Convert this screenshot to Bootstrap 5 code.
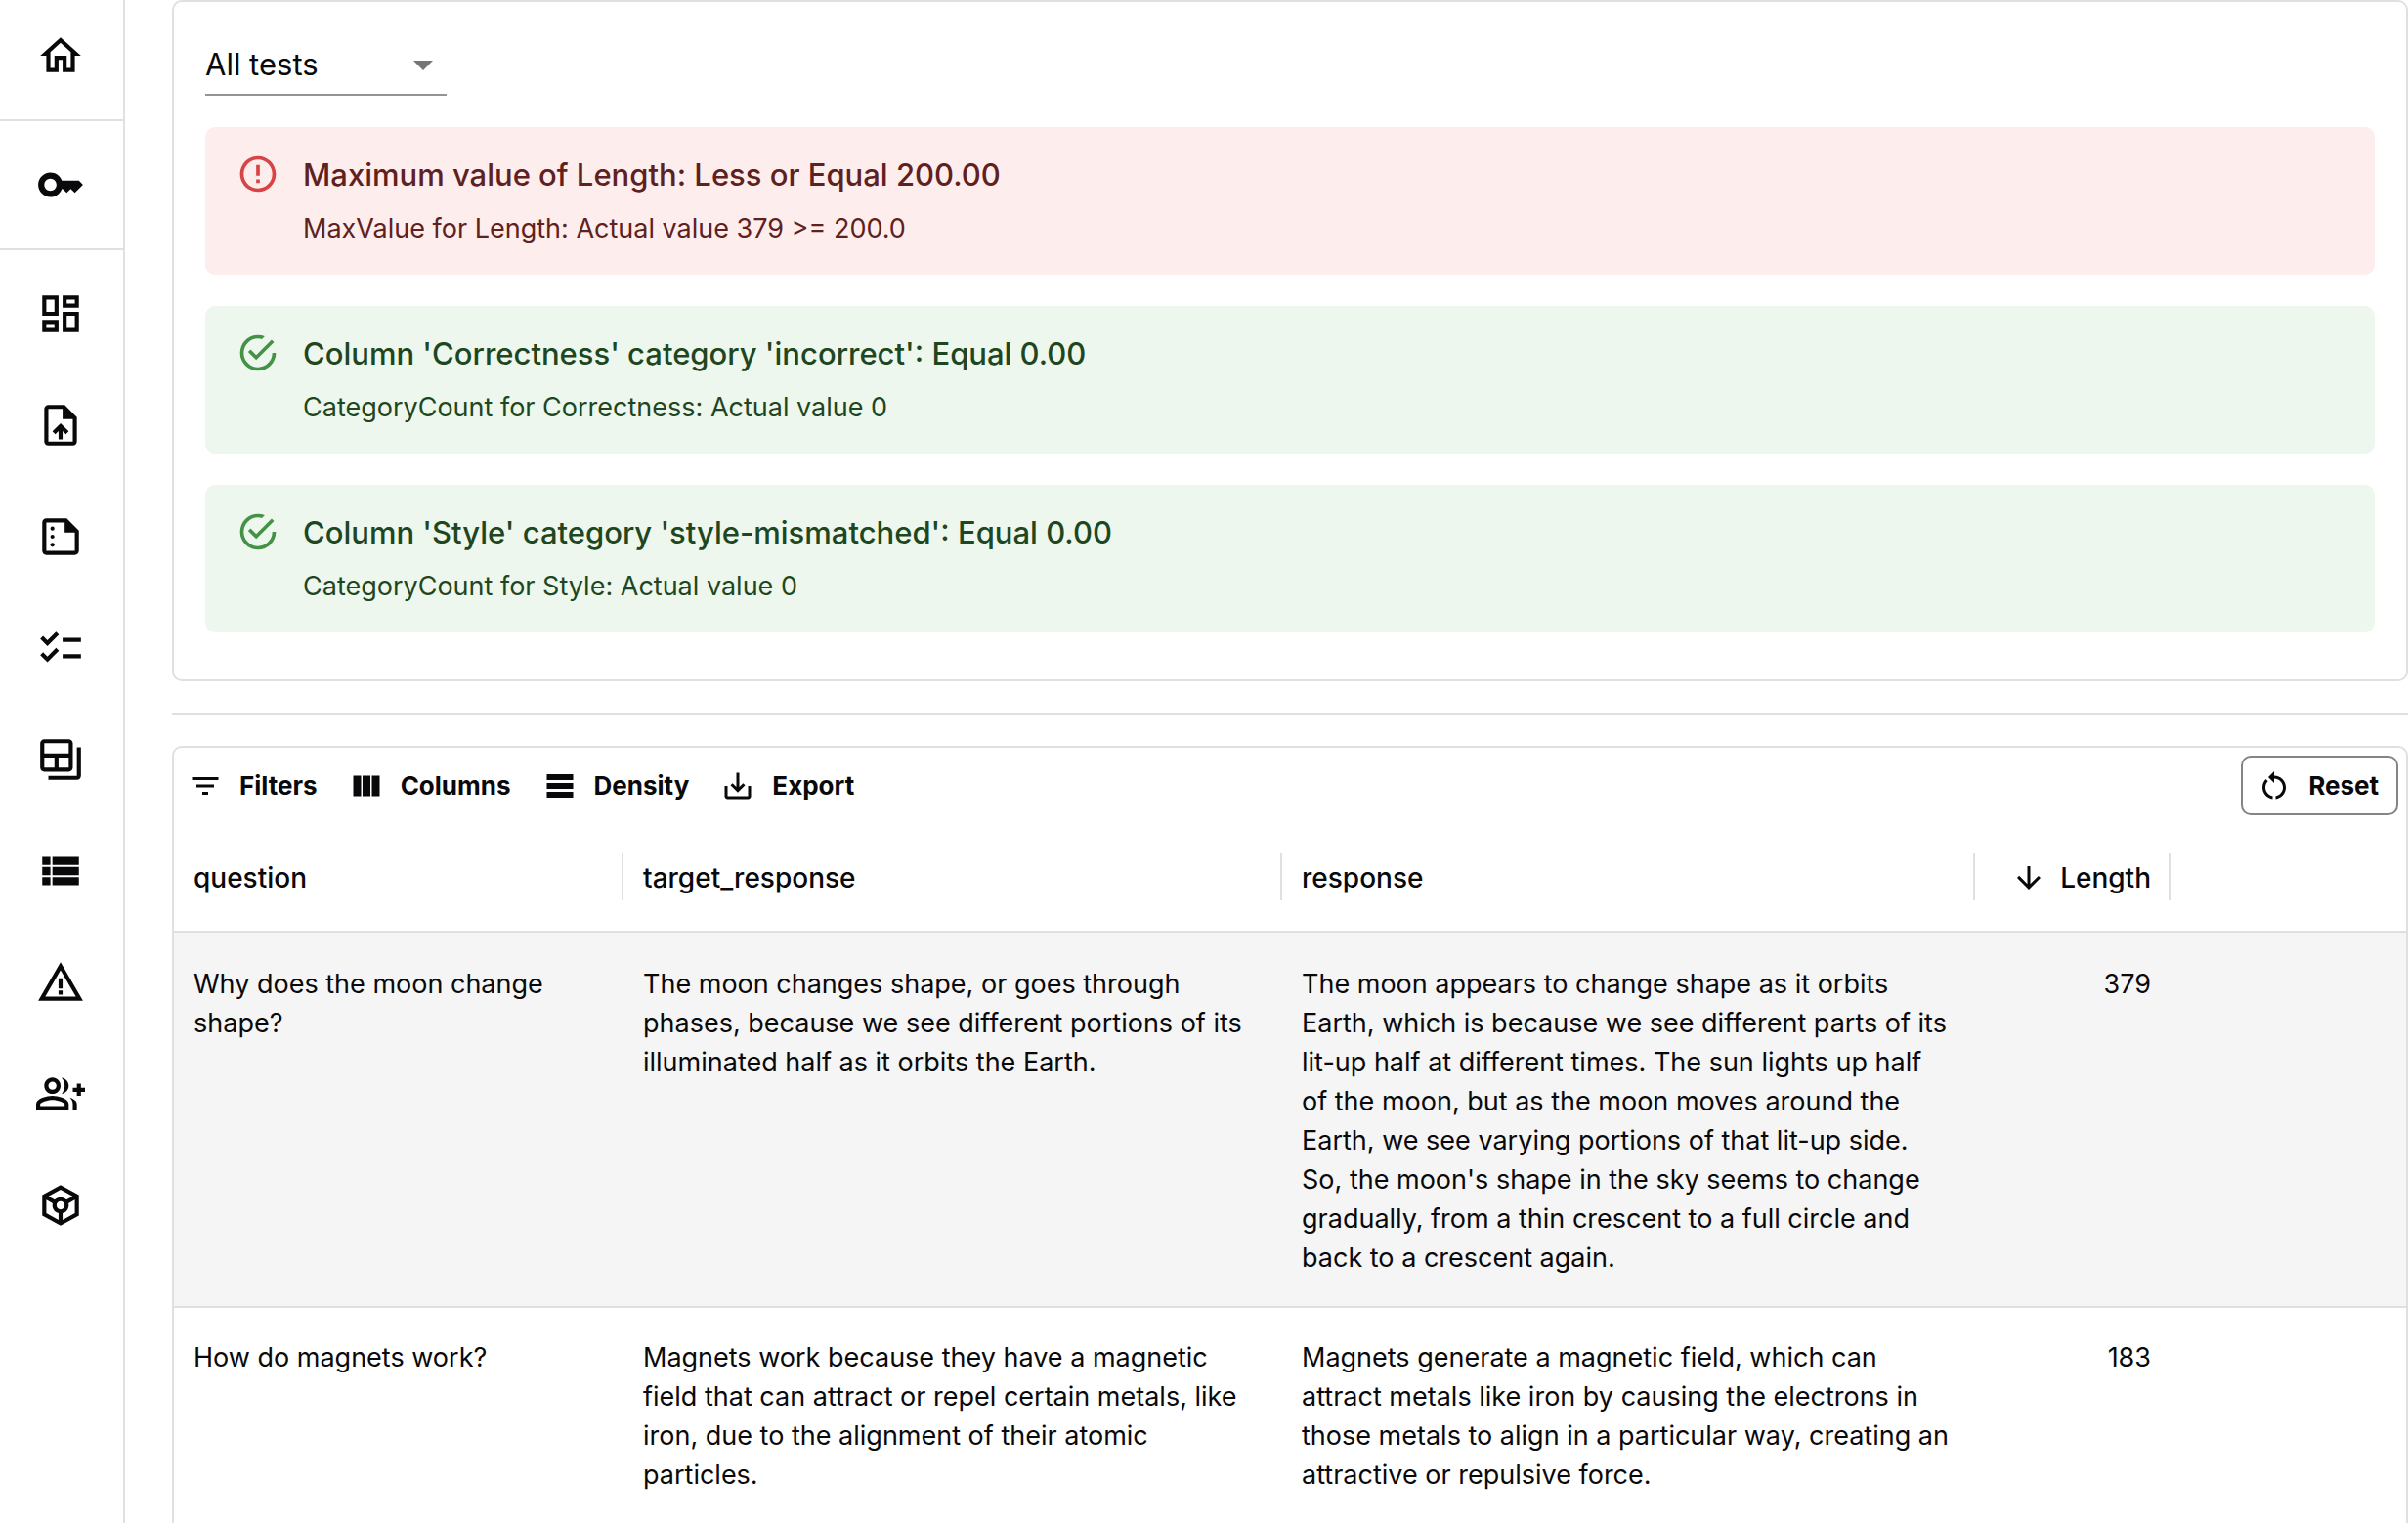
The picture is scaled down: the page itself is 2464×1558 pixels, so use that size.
<!DOCTYPE html>
<html lang="en">
<head>
<meta charset="utf-8">
<meta name="viewport" content="width=device-width, initial-scale=1">
<title>Test results</title>
<link href="https://cdn.jsdelivr.net/npm/bootstrap@5.3.0/dist/css/bootstrap.min.css" rel="stylesheet">
<style>
  :root { --line: #e0e0e0; --ink: #09090b; }
  body { font-family: Inter, "Liberation Sans", sans-serif; font-size: 27px; line-height: 40px; color: var(--ink); background: #fff; }
  svg { fill: currentColor; display: block; flex: none; }

  .side-rail { width: 128px; border-right: 2px solid var(--line); }
  .rail-link { height: 114px; padding-right: 2px; color: var(--ink); }
  .rail-link svg { width: 50px; height: 50px; }
  .rail-top { height: 132px; border-bottom: 2px solid var(--line); }
  .rail-first { height: 124px; padding-bottom: 8px; }
  .rail-group { padding-top: 8px; }

  .content-area { padding-left: 48px; }
  .panel { border: 2px solid var(--line); border-radius: 10px; }
  .tests-panel { padding: 32px 32px 48px; gap: 32px; }
  .divider { margin: 32px 0; border-top: 2px solid var(--line); opacity: 1; color: inherit; }

  .test-filter { width: 247px; border-bottom: 2px solid #949494; }
  .test-filter select { appearance: none; border: 0; border-radius: 0; background: none; outline: 0; font-size: 31px; line-height: 46px; padding: 9px 48px 7px 0; color: var(--ink); }
  .test-filter svg { position: absolute; right: 0; top: 8px; width: 48px; height: 48px; color: #757575; pointer-events: none; }

  .test-note { margin: 0; border: 0; border-radius: 10px; padding: 12px 32px; gap: 24px; }
  .test-note svg { width: 44px; height: 44px; margin-top: 14px; }
  .test-note h2 { font-size: 31px; line-height: 48px; font-weight: 500; margin: 0 0 11px; color: inherit; }
  .test-note .note-text { padding: 13px 0 15px; }
  .note-fail { background: #fdeded; color: #5f2120; }
  .note-fail svg { color: #d84343; }
  .note-pass { background: #edf7ed; color: #1e4620; }
  .note-pass svg { color: #439246; }

  .grid-panel { border-bottom-left-radius: 0; border-bottom-right-radius: 0; border-bottom: 0; }
  .grid-bar { padding: 8px; gap: 16px; }
  .tool { font-size: 26px; line-height: 45px; font-weight: 700; color: var(--ink); padding: 8px 10px 8px 6px; gap: 17px; border: 0; border-radius: 10px; }
  .tool svg { width: 36px; height: 36px; }
  .tool-outline { padding: 6px 18px 6px 14px; border: 2px solid #848484; }

  .data-grid { table-layout: fixed; border-collapse: separate; border-spacing: 0; margin: 0; color: var(--ink); }
  .data-grid th { height: 112px; padding: 0; font-size: 28px; font-weight: 500; border-bottom: 2px solid var(--line); vertical-align: middle; }
  .data-grid th > div { height: 48px; padding: 2px 18px 0 20px; border-right: 2px solid var(--line); gap: 14px; }
  .data-grid th:last-child > div { border-right: 0; }
  .data-grid th svg { width: 36px; height: 36px; }
  .data-grid td { padding: 31px 24px 29px 20px; border-top: 2px solid var(--line); vertical-align: top; }
  .data-grid td.num { padding-right: 20px; }
  .data-grid .row-hover td { background: #f5f5f5; border-top-color: #f5f5f5; }
  .c-question { width: 460px; } .c-target { width: 674px; } .c-response { width: 709px; } .c-length { width: 200px; }
</style>
</head>
<body>
<div class="d-flex vh-100 overflow-hidden">
  <nav class="side-rail flex-shrink-0" aria-label="Main">
    <a class="rail-link rail-top rail-first d-flex align-items-center justify-content-center" href="#" aria-label="Home"><svg viewBox="0 0 24 24"><path d="M12 5.69l5 4.5V18h-2v-6H9v6H7v-7.81l5-4.5M12 3L2 12h3v8h6v-6h2v6h6v-8h3L12 3z"/></svg></a>
    <a class="rail-link rail-top d-flex align-items-center justify-content-center" href="#" aria-label="Secrets"><svg viewBox="0 0 24 24"><path d="M21 10h-8.35C11.83 7.67 9.61 6 7 6c-3.31 0-6 2.69-6 6s2.69 6 6 6c2.61 0 4.83-1.67 5.65-4H13l2 2 2-2 2 2 4-4.04L21 10zM7 15c-1.65 0-3-1.35-3-3s1.35-3 3-3 3 1.35 3 3-1.35 3-3 3z"/></svg></a>
    <div class="rail-group">
      <a class="rail-link d-flex align-items-center justify-content-center" href="#" aria-label="Dashboard"><svg viewBox="0 0 24 24"><path d="M19 5v2h-4V5h4M9 5v6H5V5h4m10 8v6h-4v-6h4M9 17v2H5v-2h4M21 3h-8v6h8V3zM11 3H3v10h8V3zm10 8h-8v10h8V11zm-10 4H3v6h8v-6z"/></svg></a>
      <a class="rail-link d-flex align-items-center justify-content-center" href="#" aria-label="Upload"><svg viewBox="0 0 24 24"><path d="M14 2H6c-1.1 0-1.99.9-1.99 2L4 20c0 1.1.89 2 1.99 2H18c1.1 0 2-.9 2-2V8l-6-6zm4 18H6V4h7v5h5v11zM8 15.01l1.41 1.41L11 14.84V19h2v-4.16l1.59 1.59L16 15.01 12.01 11z"/></svg></a>
      <a class="rail-link d-flex align-items-center justify-content-center" href="#" aria-label="Reports"><svg viewBox="0 0 24 24"><path d="M15 3H5c-1.1 0-1.99.9-1.99 2L3 19c0 1.1.89 2 1.99 2H19c1.1 0 2-.9 2-2V9l-6-6zM5 19V5h9v5h5v9H5z"/><circle cx="8" cy="8" r="1"/><circle cx="8" cy="12" r="1"/><circle cx="8" cy="16" r="1"/></svg></a>
      <a class="rail-link d-flex align-items-center justify-content-center" href="#" aria-label="Test suites"><svg viewBox="0 0 24 24"><path d="M22 7h-9v2h9V7zm0 8h-9v2h9v-2zM5.54 11L2 7.46l1.41-1.41 2.12 2.12 4.24-4.24 1.41 1.41L5.54 11zm0 8L2 15.46l1.41-1.41 2.12 2.12 4.24-4.24 1.41 1.41L5.54 19z"/></svg></a>
      <a class="rail-link d-flex align-items-center justify-content-center" href="#" aria-label="Snapshots"><svg viewBox="0 0 24 24"><path d="M20 6v14H6v2h14c1.1 0 2-.9 2-2V6h-2z"/><path d="M16 2H4c-1.1 0-2 .9-2 2v12c0 1.1.9 2 2 2h12c1.1 0 2-.9 2-2V4c0-1.1-.9-2-2-2zM9 16H4v-5h5v5zm7 0h-5v-5h5v5zm0-7H4V4h12v5z"/></svg></a>
      <a class="rail-link d-flex align-items-center justify-content-center" href="#" aria-label="Datasets"><svg viewBox="0 0 24 24"><path d="M3 14h4v-4H3v4zm0 5h4v-4H3v4zM3 9h4V5H3v4zm5 5h13v-4H8v4zm0 5h13v-4H8v4zM8 5v4h13V5H8z"/></svg></a>
      <a class="rail-link d-flex align-items-center justify-content-center" href="#" aria-label="Alerts"><svg viewBox="0 0 24 24"><path d="M12 5.99L19.53 19H4.47L12 5.99M12 2L1 21h22L12 2zm1 14h-2v2h2v-2zm0-6h-2v5h2v-5z"/></svg></a>
      <a class="rail-link d-flex align-items-center justify-content-center" href="#" aria-label="Add members"><svg viewBox="0 0 24 24"><path d="M22 9V7h-2v2h-2v2h2v2h2v-2h2V9zM8 12c2.21 0 4-1.79 4-4s-1.79-4-4-4-4 1.79-4 4 1.79 4 4 4zm0-6c1.1 0 2 .9 2 2s-.9 2-2 2-2-.9-2-2 .9-2 2-2zm0 7c-2.67 0-8 1.34-8 4v3h16v-3c0-2.66-5.33-4-8-4zm6 5H2v-.99C2.2 16.29 5.3 15 8 15s5.8 1.29 6 2v1zM12.51 4.05C13.43 5.11 14 6.49 14 8s-.57 2.89-1.49 3.95C14.47 11.7 16 10.04 16 8s-1.53-3.7-3.49-3.95zM16.53 13.83C17.42 14.66 18 15.7 18 17v3h2v-3c0-1.45-1.59-2.51-3.47-3.17z"/></svg></a>
      <a class="rail-link d-flex align-items-center justify-content-center" href="#" aria-label="Models"><svg viewBox="0 0 24 24"><path d="M21 7l-9-5-9 5v10l9 5 9-5V7zm-9-2.71l5.91 3.28-3.01 1.67C14.17 8.48 13.14 8 12 8s-2.17.48-2.9 1.24L6.09 7.57 12 4.29zm-1 14.87l-6-3.33V9.26L8.13 11c-.08.31-.13.65-.13 1 0 1.86 1.27 3.43 3 3.87v3.29zM10 12c0-1.1.9-2 2-2s2 .9 2 2-.9 2-2 2-2-.9-2-2zm3 7.16v-3.28c1.73-.44 3-2.01 3-3.87 0-.35-.05-.69-.13-1.01L19 9.26v6.57l-6 3.33z"/></svg></a>
    </div>
  </nav>

  <main class="content-area flex-grow-1">
    <section class="panel tests-panel d-flex flex-column" aria-label="Tests">
      <div class="test-filter position-relative">
        <select class="w-100 d-block" aria-label="Test filter"><option>All tests</option><option>Failed tests</option><option>Passed tests</option></select>
        <svg viewBox="0 0 24 24"><path d="M7 10l5 5 5-5z"/></svg>
      </div>
      <div class="alert test-note note-fail d-flex" role="alert">
        <svg viewBox="0 0 24 24"><path d="M11 15h2v2h-2zm0-8h2v6h-2zm.99-5C6.47 2 2 6.48 2 12s4.47 10 9.99 10C17.52 22 22 17.52 22 12S17.52 2 11.99 2zM12 20c-4.42 0-8-3.58-8-8s3.58-8 8-8 8 3.58 8 8-3.58 8-8 8z"/></svg>
        <div class="note-text"><h2>Maximum value of Length: Less or Equal 200.00</h2><div>MaxValue for Length: Actual value 379 &gt;= 200.0</div></div>
      </div>
      <div class="alert test-note note-pass d-flex" role="alert">
        <svg viewBox="0 0 24 24"><path d="M20 12a8 8 0 0 1-8 8 8 8 0 0 1-8-8 8 8 0 0 1 8-8c.76 0 1.5.11 2.2.31l1.57-1.57A9.82 9.82 0 0 0 12 2 10 10 0 0 0 2 12a10 10 0 0 0 10 10 10 10 0 0 0 10-10M7.91 10.08L6.5 11.5 11 16 21 6l-1.41-1.42L11 13.17l-3.09-3.09z"/></svg>
        <div class="note-text"><h2>Column 'Correctness' category 'incorrect': Equal 0.00</h2><div>CategoryCount for Correctness: Actual value 0</div></div>
      </div>
      <div class="alert test-note note-pass d-flex" role="alert">
        <svg viewBox="0 0 24 24"><path d="M20 12a8 8 0 0 1-8 8 8 8 0 0 1-8-8 8 8 0 0 1 8-8c.76 0 1.5.11 2.2.31l1.57-1.57A9.82 9.82 0 0 0 12 2 10 10 0 0 0 2 12a10 10 0 0 0 10 10 10 10 0 0 0 10-10M7.91 10.08L6.5 11.5 11 16 21 6l-1.41-1.42L11 13.17l-3.09-3.09z"/></svg>
        <div class="note-text"><h2>Column 'Style' category 'style-mismatched': Equal 0.00</h2><div>CategoryCount for Style: Actual value 0</div></div>
      </div>
    </section>

    <hr class="divider">

    <section class="panel grid-panel" aria-label="Results">
      <div class="grid-bar d-flex align-items-center">
        <button type="button" class="btn tool d-flex align-items-center"><svg viewBox="0 0 24 24"><path d="M10 18h4v-2h-4v2zM3 6v2h18V6H3zm3 7h12v-2H6v2z"/></svg>Filters</button>
        <button type="button" class="btn tool d-flex align-items-center"><svg viewBox="0 0 24 24"><path d="M14.67 5v14H9.33V5h5.34zm1 14H21V5h-5.33v14zm-7.34 0V5H3v14h5.33z"/></svg>Columns</button>
        <button type="button" class="btn tool d-flex align-items-center"><svg viewBox="0 0 24 24"><path d="M21 8H3V4h18v4zm0 2H3v4h18v-4zm0 6H3v4h18v-4z"/></svg>Density</button>
        <button type="button" class="btn tool d-flex align-items-center"><svg viewBox="0 0 24 24"><path d="M19 12v7H5v-7H3v7c0 1.100.9 2 2 2h14c1.100 0 2-.9 2-2v-7h-2zm-6 .67l2.590-2.580L17 11.500l-5 5-5-5 1.410-1.410L11 12.670V3h2z"/></svg>Export</button>
        <button type="button" class="btn tool tool-outline d-flex align-items-center ms-auto"><svg viewBox="0 0 24 24"><path d="M12 5V2L8 6l4 4V7c3.310 0 6 2.690 6 6 0 2.970-2.170 5.430-5 5.910v2.020c3.950-.49 7-3.850 7-7.930 0-4.420-3.580-8-8-8zm-6 8c0-1.650.67-3.150 1.760-4.240L6.340 7.340C4.900 8.790 4 10.790 4 13c0 4.080 3.050 7.440 7 7.930v-2.020c-2.830-.48-5-2.940-5-5.910z"/></svg>Reset</button>
      </div>
      <table class="data-grid w-100">
        <colgroup><col class="c-question"><col class="c-target"><col class="c-response"><col class="c-length"><col></colgroup>
        <thead>
          <tr>
            <th scope="col"><div class="d-flex align-items-center">question</div></th>
            <th scope="col"><div class="d-flex align-items-center">target_response</div></th>
            <th scope="col"><div class="d-flex align-items-center">response</div></th>
            <th scope="col" aria-sort="descending"><div class="d-flex align-items-center justify-content-end"><svg viewBox="0 0 24 24"><path d="M20 12l-1.410-1.410L13 16.170V4h-2v12.170l-5.580-5.590L4 12l8 8 8-8z"/></svg>Length</div></th>
            <th><div></div></th>
          </tr>
        </thead>
        <tbody>
          <tr class="row-hover">
            <td>Why does the moon change shape?</td>
            <td>The moon changes shape, or goes through phases, because we see different portions of its illuminated half as it orbits the Earth.</td>
            <td>The moon appears to change shape as it orbits Earth, which is because we see different parts of its lit-up half at different times. The sun lights up half of the moon, but as the moon moves around the Earth, we see varying portions of that lit-up side. So, the moon's shape in the sky seems to change gradually, from a thin crescent to a full circle and back to a crescent again.</td>
            <td class="num text-end">379</td>
            <td></td>
          </tr>
          <tr>
            <td>How do magnets work?</td>
            <td>Magnets work because they have a magnetic field that can attract or repel certain metals, like iron, due to the alignment of their atomic particles.</td>
            <td>Magnets generate a magnetic field, which can attract metals like iron by causing the electrons in those metals to align in a particular way, creating an attractive or repulsive force.</td>
            <td class="num text-end">183</td>
            <td></td>
          </tr>
        </tbody>
      </table>
    </section>
  </main>
</div>
<script src="https://cdn.jsdelivr.net/npm/bootstrap@5.3.0/dist/js/bootstrap.bundle.min.js"></script>
</body>
</html>
